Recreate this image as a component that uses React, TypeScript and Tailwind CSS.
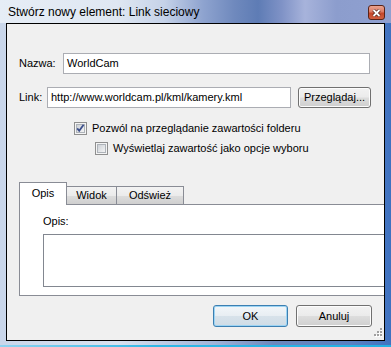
import React from "react";

function CheckBox({ checked }: { checked: boolean }) {
  return (
    <svg width="13" height="13" viewBox="0 0 13 13" className="shrink-0">
      <defs>
        <linearGradient id={checked ? "cbg1" : "cbg2"} x1="0" y1="0" x2="1" y2="1">
          <stop offset="0" stopColor="#cbcfd5" />
          <stop offset="1" stopColor="#f6f6f6" />
        </linearGradient>
      </defs>
      <rect x="0.5" y="0.5" width="12" height="12" fill="#f4f4f4" stroke="#8f8f8f" />
      <rect x="2.5" y="2.5" width="8" height="8" fill={`url(#${checked ? "cbg1" : "cbg2"})`} stroke="#aeb3b9" />
      {checked && (
        <path d="M3.2 6.4 L5.2 8.8 L9.6 2.8" fill="none" stroke="#3d508c" strokeWidth="1.8" />
      )}
    </svg>
  );
}

function Btn({ children, w, h, focused }: { children: React.ReactNode; w: string; h: string; focused?: boolean }) {
  return (
    <div
      className={`${w} ${h} rounded-[3px] border flex items-center justify-center text-[11px] text-black ${
        focused
          ? "border-[#3c7fb1] bg-[linear-gradient(#f2f6f9_0%,#e8eef3_48%,#d7e2ea_52%,#cfdce6_100%)] shadow-[inset_0_0_0_1px_#9cd4f4]"
          : "border-[#707070] bg-[linear-gradient(#f2f2f2_0%,#ebebeb_48%,#dddddd_52%,#cfcfcf_100%)] shadow-[inset_0_0_0_1px_#fcfcfc]"
      }`}
    >
      {children}
    </div>
  );
}

export default function App() {
  return (
    <div
      className="w-[391px] h-[347px] relative overflow-hidden bg-[linear-gradient(90deg,#c9d6ea_0%,#d8e2f0_30%,#9fb3d8_55%,#6d88bd_70%,#5a80c2_90%,#3f72c0_100%)]"
      style={{ fontFamily: '"Liberation Sans", Arial, sans-serif' }}
    >
      {/* Title bar */}
      <div className="h-[23px] relative flex items-center pl-[8px] bg-[linear-gradient(90deg,#e6edf6_0%,#dfe7f2_30%,#c5d2e8_42%,#8ea3cf_52%,#6f89bd_60%,#5e7cb5_66%,#7f92c6_72%,#a7b3db_78%,#8c9dcd_86%,#8fa0d0_100%)]">
        <span className="text-[12px] text-black leading-none mt-[1px]">Stwórz nowy element: Link sieciowy</span>
        <div className="absolute left-[368px] top-[5px] w-[17px] h-[15px] rounded-[3px] border border-[#5a2418] bg-[linear-gradient(#eaa38f_0%,#dc7a63_45%,#c4462a_55%,#d2603f_100%)] flex items-center justify-center">
          <svg width="9" height="8" viewBox="0 0 9 8">
            <path d="M1.5 1 L7.5 7 M7.5 1 L1.5 7" stroke="#4a1f16" strokeWidth="3.2" />
            <path d="M1.5 1 L7.5 7 M7.5 1 L1.5 7" stroke="#ffffff" strokeWidth="1.8" />
          </svg>
        </div>
      </div>

      {/* Client area */}
      <div className="mx-[6px] h-[318px] border border-black bg-[#f0f0f0] relative overflow-hidden flex flex-col text-[11px] text-black">
        {/* Nazwa */}
        <div className="mt-[29px] flex items-center pl-[12px]">
          <span className="w-[44px]">Nazwa:</span>
          <div className="w-[307px] h-[21px] bg-white border border-[#abadb3] flex items-center pl-[3px]">WorldCam</div>
        </div>
        {/* Link */}
        <div className="mt-[13px] flex items-center pl-[12px]">
          <span className="w-[28px]">Link:</span>
          <div className="w-[244px] h-[21px] bg-white border border-[#abadb3] flex items-center pl-[3px]">
            http://www.worldcam.pl/kml/kamery.kml
          </div>
          <div className="ml-[7px]">
            <Btn w="w-[73px]" h="h-[21px]">Przeglądaj...</Btn>
          </div>
        </div>
        {/* Checkboxes */}
        <div className="mt-[14px] flex items-center pl-[67px] h-[13px] gap-[5px]">
          <CheckBox checked />
          <span>Pozwól na przeglądanie zawartości folderu</span>
        </div>
        <div className="mt-[7px] flex items-center pl-[88px] h-[13px] gap-[5px]">
          <CheckBox checked={false} />
          <span>Wyświetlaj zawartość jako opcje wyboru</span>
        </div>

        {/* Tabs */}
        <div className="mt-[27px] pl-[12px] flex items-end h-[23px] relative z-10">
          <div className="w-[48px] h-[23px] bg-white border border-[#898c95] border-b-0 flex items-center justify-center pb-[1px]">
            Opis
          </div>
          <div className="w-[50px] h-[19px] border border-[#898c95] border-l-0 bg-[linear-gradient(#f3f3f3_0%,#ebebeb_50%,#dddddd_51%,#cfcfcf_100%)] flex items-center justify-center">
            Widok
          </div>
          <div className="w-[67px] h-[19px] border border-[#898c95] border-l-0 bg-[linear-gradient(#f3f3f3_0%,#ebebeb_50%,#dddddd_51%,#cfcfcf_100%)] flex items-center justify-center">
            Odśwież
          </div>
        </div>
        <div className="ml-[12px] -mt-[1px] w-[372px] h-[92px] shrink-0 bg-white border border-[#898c95] pl-[23px] pt-[10px] flex flex-col">
          <span className="leading-[13px]">Opis:</span>
          <div className="mt-[6px] w-[360px] h-[53px] border border-[#828790] bg-white" />
        </div>

        {/* Buttons */}
        <div className="mt-[9px] flex justify-end gap-[8px] pr-[12px]">
          <Btn w="w-[75px]" h="h-[22px]" focused>
            OK
          </Btn>
          <Btn w="w-[76px]" h="h-[22px]">Anuluj</Btn>
        </div>

        {/* size grip */}
        <svg className="absolute right-[2px] bottom-[2px]" width="10" height="10" viewBox="0 0 10 10">
          {[
            [8, 0],
            [8, 3],
            [5, 3],
            [8, 6],
            [5, 6],
            [2, 6],
          ].map(([x, y], i) => (
            <g key={i}>
              <rect x={x + 1} y={y + 1} width="2" height="2" fill="#ffffff" />
              <rect x={x} y={y} width="2" height="2" fill="#a0a0a0" />
            </g>
          ))}
        </svg>
      </div>

      {/* bottom cyan line */}
      <div className="absolute left-0 right-0 bottom-0 h-[2px] bg-[linear-gradient(90deg,#8fd3f0_0%,#2fb8e6_40%,#23b0e3_100%)]" />
    </div>
  );
}
